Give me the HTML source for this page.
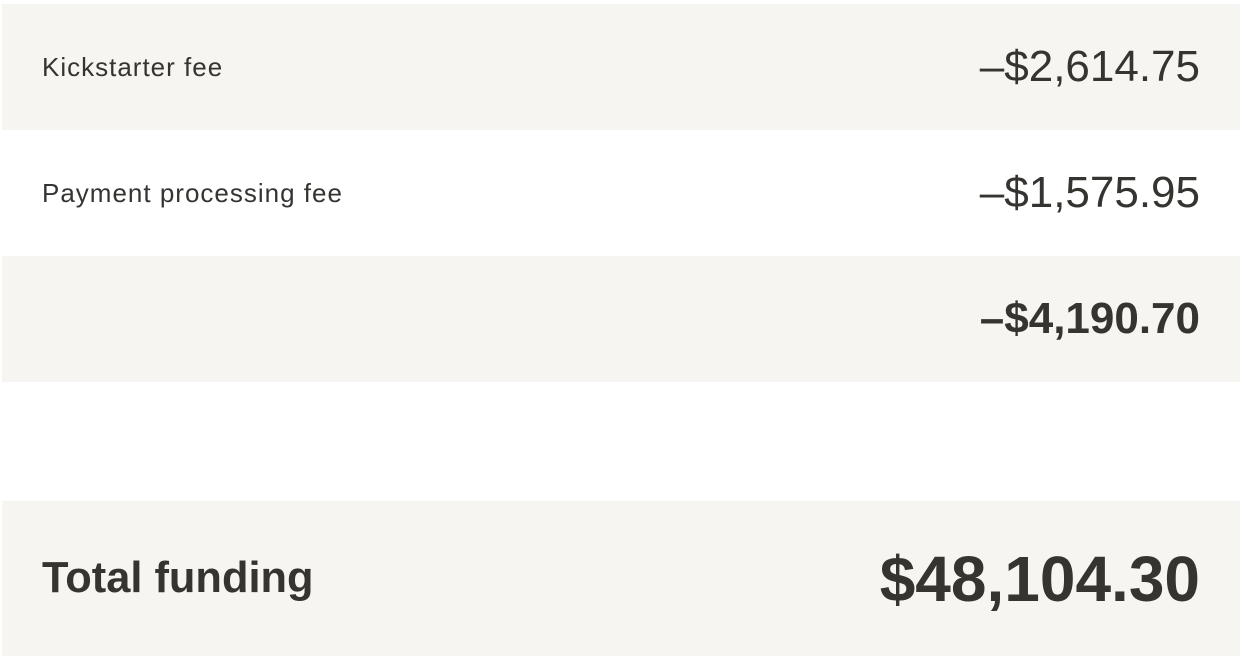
<!DOCTYPE html>
<html><head><style>
html,body{margin:0;padding:0;background:#fff;width:1240px;height:656px;overflow:hidden;font-family:"Liberation Sans",Arial,sans-serif;color:#353431}
.row{position:absolute;left:2px;width:1238px;display:flex;align-items:center;justify-content:space-between;box-sizing:border-box;padding:0 40px 0 40px}
.g{background:#f6f5f2}
.l{font-size:26px;letter-spacing:1px}
.a{font-size:44px;letter-spacing:0}
</style></head><body>
<div class="row g" style="top:4px;height:126px"><span class="l">Kickstarter fee</span><span class="a">–$2,614.75</span></div>
<div class="row" style="top:130px;height:126px"><span class="l">Payment processing fee</span><span class="a">–$1,575.95</span></div>
<div class="row g" style="top:256px;height:126px"><span></span><span class="a" style="font-weight:bold">–$4,190.70</span></div>
<div class="row g" style="top:501px;height:155px"><span style="font-size:43.4px;font-weight:bold">Total funding</span><span style="font-size:64px;font-weight:bold;letter-spacing:0">$48,104.30</span></div>
</body></html>
